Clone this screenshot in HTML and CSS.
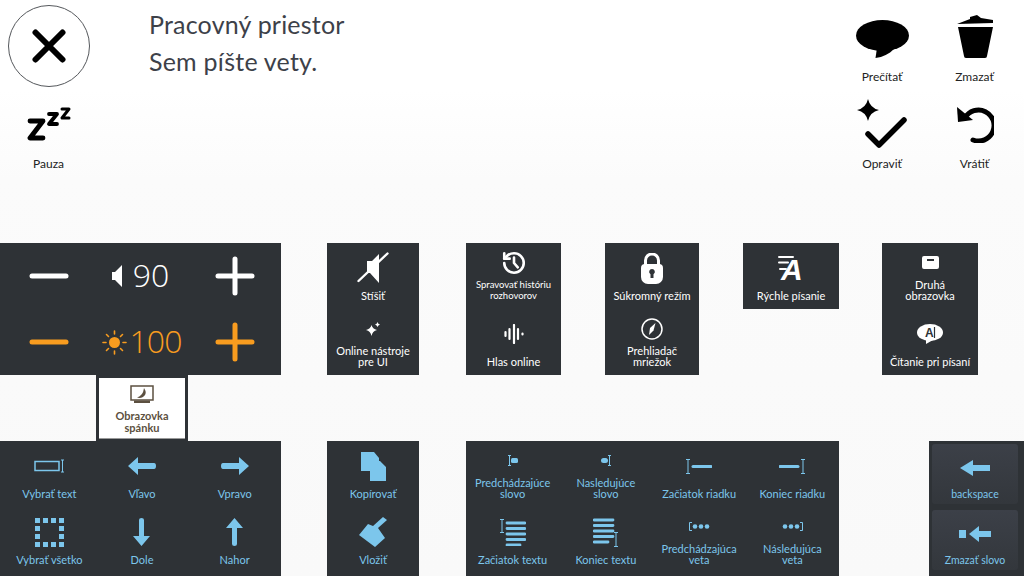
FILE: index.html
```html
<!DOCTYPE html>
<html lang="sk">
<head>
    <meta charset="UTF-8">
    <title>Pracovný priestor</title>
    <link rel="stylesheet" href="styles.css">
</head>
<body>
    <header class="top">
        <div class="left-col">
            <div class="close-wrap">
                <button class="close-button" aria-label="Zavrieť">
                    <svg width="34" height="34" viewBox="0 0 34 34"><path d="M3.500 3.500 30.500 30.500M30.500 3.500 3.500 30.500" class="stroke" stroke-width="6"/></svg>
                </button>
            </div>
            <div class="action">
                <div class="action-icon">
                    <svg width="44" height="34" viewBox="0 0 44 34"><path d="M3 14H16L3 31H16" class="stroke" stroke-width="4.800"/><path d="M22 7H30L22 17H30" class="stroke" stroke-width="3.800"/><path d="M35 2H42L35 11H42" class="stroke" stroke-width="3"/></svg>
                </div>
                <div class="action-label">Pauza</div>
            </div>
        </div>
        <div class="workspace">
            <div>Pracovný priestor</div>
            <div>Sem píšte vety.</div>
        </div>
        <div class="actions">
            <div class="action">
                <div class="action-icon">
                    <svg class="bubble-icon" width="53" height="38" viewBox="0 0 53 38"><ellipse cx="26.500" cy="15.500" rx="26.500" ry="15.500"/><path d="M21 28 19.500 38C27 37 33 34 38 29Z"/></svg>
                </div>
                <div class="action-label">Prečítať</div>
            </div>
            <div class="action">
                <div class="action-icon">
                    <svg width="36" height="43" viewBox="0 0 36 43"><path d="M0 9 13 4V2L20 0 24 3 36 5V8Z"/><path d="M1 12H36L30 41Q30 43 28 43H9Q7 43 7 41Z"/></svg>
                </div>
                <div class="action-label">Zmazať</div>
            </div>
            <div class="action">
                <div class="action-icon">
                    <svg width="50" height="50" viewBox="0 0 50 50"><path d="M11 0Q13 9 22 11 13 13 11 22 9 13 0 11 9 9 11 0Z"/><path d="M11 35 22 46 47 21" class="stroke" stroke-width="5.500"/></svg>
                </div>
                <div class="action-label">Opraviť</div>
            </div>
            <div class="action">
                <div class="action-icon">
                    <svg width="38" height="38" viewBox="0 0 38 38"><path d="M9 13A15.500 15.500 0 1 1 17 35" fill="none" stroke="#000" stroke-width="5" stroke-linecap="round"/><path d="M1 2 2 17 17 15Z"/></svg>
                </div>
                <div class="action-label">Vrátiť</div>
            </div>
        </div>
    </header>

    <section class="panel-row">
        <div class="panel panel-levels">
            <div class="level-cell"><svg width="40" height="6" viewBox="0 0 40 6"><path d="M3 3H37" class="stroke" stroke-width="5"/></svg></div>
            <div class="level-cell level-value">
                <svg width="11" height="22" viewBox="0 0 11 22"><path d="M0 7H3L10 0V22L3 15H0Z" fill="#fff"/></svg>
                <span class="level-num">90</span>
            </div>
            <div class="level-cell"><svg width="40" height="40" viewBox="0 0 40 40"><path d="M3 20H37M20 3V37" class="stroke" stroke-width="5"/></svg></div>
            <div class="level-cell level-orange"><svg width="40" height="6" viewBox="0 0 40 6"><path d="M3 3H37" class="stroke" stroke-width="5"/></svg></div>
            <div class="level-cell level-value level-orange">
                <svg width="25" height="25" viewBox="0 0 25 25"><circle cx="12.500" cy="12.500" r="5.500" fill="currentColor"/><path d="M12.500 1V4M12.500 21V24M1 12.500H4M21 12.500H24M4.500 4.500 6.500 6.500M18.500 18.500 20.500 20.500M20.500 4.500 18.500 6.500M6.500 18.500 4.500 20.500" class="stroke" stroke-width="1.600"/></svg>
                <span class="level-num">100</span>
            </div>
            <div class="level-cell level-orange"><svg width="40" height="40" viewBox="0 0 40 40"><path d="M3 20H37M20 3V37" class="stroke" stroke-width="5"/></svg></div>
        </div>

        <div class="panel panel-mute">
            <div class="tile">
                <div class="tile-icon"><svg width="32" height="32" viewBox="0 0 32 32"><path d="M10 9H15L22 2V31L13 21H10Z" fill="#fff"/><path d="M1.500 29 30.500 1.500" class="stroke" stroke-width="2.400"/></svg></div>
                <div class="tile-label">Stíšiť</div>
            </div>
            <div class="tile">
                <div class="tile-icon"><svg width="14" height="14" viewBox="0 0 14 14"><path d="M5.500 3Q6.500 7 11 8 6.500 9 5.500 14 4.500 9 0 8 4.500 7 5.500 3Z" fill="#fff"/><path d="M11.500 0Q12 2 14 2.500 12 3 11.500 5 11 3 9 2.500 11 2 11.500 0Z" fill="#fff"/></svg></div>
                <div class="tile-label">Online nástroje<br>pre UI</div>
            </div>
        </div>

        <div class="panel panel-history">
            <div class="tile">
                <div class="tile-icon"><svg width="26" height="26" viewBox="0 0 24 24"><path d="M3 12a9 9 0 1 0 9-9 9.750 9.750 0 0 0-6.740 2.740L3 8" class="stroke" stroke-width="2.400"/><path d="M3 3v5h5" class="stroke" stroke-width="2.400"/><path d="M12 7v5l3.500 4" class="stroke" stroke-width="2.400"/></svg></div>
                <div class="tile-label tile-label-small">Spravovať históriu<br>rozhovorov</div>
            </div>
            <div class="tile">
                <div class="tile-icon"><svg width="20" height="20" viewBox="0 0 20 20"><path d="M1.500 8V12M5.500 5V15M10 1V19M14 5V15M18.500 9.500V10.500" class="stroke" stroke-width="2.200"/></svg></div>
                <div class="tile-label">Hlas online</div>
            </div>
        </div>

        <div class="panel panel-private">
            <div class="tile">
                <div class="tile-icon"><svg width="22" height="31" viewBox="0 0 22 31"><path d="M4.500 13V7.500a6.500 6.500 0 0 1 13 0V13" fill="none" stroke="#fff" stroke-width="3"/><path fill-rule="evenodd" d="M4 11H18Q22 11 22 15V24A7 7 0 0 1 15 31H7A7 7 0 0 1 0 24V15Q0 11 4 11ZM11 16A2.800 2.800 0 0 0 9.500 21.200V25H12.500V21.200A2.800 2.800 0 0 0 11 16Z" fill="#fff"/></svg></div>
                <div class="tile-label">Súkromný režím</div>
            </div>
            <div class="tile">
                <div class="tile-icon"><svg width="22" height="22" viewBox="0 0 22 22"><circle cx="11" cy="11" r="10" fill="none" stroke="#fff" stroke-width="1.500"/><path d="M14.500 5 12.500 12.500 8 17 9 10Z" fill="#fff"/></svg></div>
                <div class="tile-label">Prehliadač<br>mriežok</div>
            </div>
        </div>

        <div class="panel panel-fast">
            <div class="tile">
                <div class="tile-icon"><svg width="30" height="38" viewBox="0 -6 30 38"><path d="M3 2H17M3 7.500H12M4 14H10" class="stroke" stroke-width="2"/><text x="5" y="25" class="fast-a">A</text></svg></div>
                <div class="tile-label">Rýchle písanie</div>
            </div>
        </div>

        <div class="panel panel-second">
            <div class="tile">
                <div class="tile-icon"><svg width="17" height="13" viewBox="0 0 17 13"><path fill-rule="evenodd" d="M2 0H15Q17 0 17 2V11Q17 13 15 13H2Q0 13 0 11V2Q0 0 2 0ZM5 3V5H12V3Z" fill="#fff"/></svg></div>
                <div class="tile-label">Druhá<br>obrazovka</div>
            </div>
            <div class="tile">
                <div class="tile-icon"><svg width="26" height="20" viewBox="0 0 26 20"><ellipse cx="13" cy="8.500" rx="13" ry="8.500" fill="#fff"/><path d="M9 15 9 20 16 16Z" fill="#fff"/><text x="8" y="13" class="bubble-a">A</text><path d="M17.500 3V14" stroke="#2e3236" stroke-width="1.200"/></svg></div>
                <div class="tile-label">Čítanie pri písaní</div>
            </div>
        </div>
    </section>

    <div class="sleep-tile">
        <div class="sleep-inner">
            <svg width="24" height="18" viewBox="0 0 24 18"><path d="M1 1H23V15H1Z" fill="none" stroke="#5c5040" stroke-width="1.500"/><path d="M14 3Q18 9 13 12 10 13.500 7 12.500 13 11 14 3Z" fill="#5c5040"/><path d="M4 15.500H20V18H4Z" fill="#5c5040"/></svg>
            <div class="sleep-label">Obrazovka<br>spánku</div>
        </div>
    </div>

    <section class="panel-row panel-row-bottom">
        <div class="panel panel-move blue">
            <div class="tile">
                <div class="tile-icon"><svg width="31" height="14" viewBox="0 0 31 14"><path d="M1 2.500H25V11.500H1Z" fill="none" stroke="currentColor" stroke-width="1.500"/><path d="M27 1H30M28.500 1V13M27 13H30" fill="none" stroke="currentColor"/></svg></div>
                <div class="tile-label">Vybrať text</div>
            </div>
            <div class="tile">
                <div class="tile-icon"><svg width="28" height="18" viewBox="0 0 28 18"><path d="M0 9 10 0V6H26Q28 6 28 9T26 12H10V18Z" fill="currentColor"/></svg></div>
                <div class="tile-label">Vľavo</div>
            </div>
            <div class="tile">
                <div class="tile-icon"><svg width="28" height="18" viewBox="0 0 28 18"><path d="M28 9 18 0V6H2Q0 6 0 9T2 12H18V18Z" fill="currentColor"/></svg></div>
                <div class="tile-label">Vpravo</div>
            </div>
            <div class="tile">
                <div class="tile-icon"><svg width="29" height="29" viewBox="0 0 29 29" fill="currentColor"><path d="M0 0H5V5H0ZM8 0H13V5H8ZM16 0H21V5H16ZM24 0H29V5H24ZM0 8H5V13H0ZM24 8H29V13H24ZM0 16H5V21H0ZM24 16H29V21H24ZM0 24H5V29H0ZM8 24H13V29H8ZM16 24H21V29H16ZM24 24H29V29H24Z"/></svg></div>
                <div class="tile-label">Vybrať všetko</div>
            </div>
            <div class="tile">
                <div class="tile-icon"><svg width="17" height="28" viewBox="0 0 17 28"><path d="M8.500 28 0 18H6V2Q6 0 8.500 0T11 2V18H17Z" fill="currentColor"/></svg></div>
                <div class="tile-label">Dole</div>
            </div>
            <div class="tile">
                <div class="tile-icon"><svg width="17" height="28" viewBox="0 0 17 28"><path d="M8.500 0 0 10H6V26Q6 28 8.500 28T11 26V10H17Z" fill="currentColor"/></svg></div>
                <div class="tile-label">Nahor</div>
            </div>
        </div>

        <div class="panel panel-clip blue">
            <div class="tile">
                <div class="tile-icon"><svg width="25" height="29" viewBox="0 0 25 29"><path d="M0 0H13L18 6V9H19L25 15V29H9V19H0Z" fill="currentColor"/></svg></div>
                <div class="tile-label">Kopírovať</div>
            </div>
            <div class="tile">
                <div class="tile-icon"><svg width="28" height="30" viewBox="0 0 28 30"><path d="M0 18 9 7 14 9 24 0 28 3 19 11 26 21 16 30Z" fill="currentColor"/></svg></div>
                <div class="tile-label">Vložiť</div>
            </div>
        </div>

        <div class="panel panel-nav blue">
            <div class="tile">
                <div class="tile-icon"><svg width="10" height="11" viewBox="0 0 10 11"><path d="M0 .500H3M1.500 .500V10.500M0 10.500H3" fill="none" stroke="currentColor"/><rect x="3" y="3" width="7" height="5" rx="1.500" fill="currentColor"/></svg></div>
                <div class="tile-label">Predchádzajúce<br>slovo</div>
            </div>
            <div class="tile">
                <div class="tile-icon"><svg width="10" height="11" viewBox="0 0 10 11"><path d="M7 .500H10M8.500 .500V10.500M7 10.500H10" fill="none" stroke="currentColor"/><rect x="0" y="3" width="7" height="5" rx="2.500" fill="currentColor"/></svg></div>
                <div class="tile-label">Nasledujúce<br>slovo</div>
            </div>
            <div class="tile">
                <div class="tile-icon"><svg width="26" height="15" viewBox="0 0 26 15"><path d="M0 .500H4M2 .500V14.500M0 14.500H4" fill="none" stroke="currentColor"/><path d="M7 7.500H25" class="stroke" stroke-width="3"/></svg></div>
                <div class="tile-label">Začiatok riadku</div>
            </div>
            <div class="tile">
                <div class="tile-icon"><svg width="26" height="15" viewBox="0 0 26 15"><path d="M22 .500H26M24 .500V14.500M22 14.500H26" fill="none" stroke="currentColor"/><path d="M1 7.500H19" class="stroke" stroke-width="3"/></svg></div>
                <div class="tile-label">Koniec riadku</div>
            </div>
            <div class="tile">
                <div class="tile-icon"><svg width="26" height="27" viewBox="0 0 26 27"><path d="M0 .500H4M2 .500V13.500M0 13.500H4" fill="none" stroke="currentColor"/><path d="M7 4H25M7 9.500H25M7 15H25M7 20.500H25M7 26H20" class="stroke" stroke-width="2.800"/></svg></div>
                <div class="tile-label">Začiatok textu</div>
            </div>
            <div class="tile">
                <div class="tile-icon"><svg width="26" height="29" viewBox="0 0 26 29"><path d="M21 14.500H25M23 14.500V28.500M21 28.500H25" fill="none" stroke="currentColor"/><path d="M1 2H20M1 7.500H20M1 13H20M1 18.500H20M1 24H15" class="stroke" stroke-width="2.800"/></svg></div>
                <div class="tile-label">Koniec textu</div>
            </div>
            <div class="tile">
                <div class="tile-icon"><svg width="21" height="9" viewBox="0 0 21 9"><path d="M3 .500H.500V8.500H3" fill="none" stroke="currentColor"/><circle cx="6" cy="4.500" r="2.300" fill="currentColor"/><circle cx="12" cy="4.500" r="2.300" fill="currentColor"/><circle cx="18" cy="4.500" r="2.300" fill="currentColor"/></svg></div>
                <div class="tile-label">Predchádzajúca<br>veta</div>
            </div>
            <div class="tile">
                <div class="tile-icon"><svg width="21" height="9" viewBox="0 0 21 9"><path d="M18 .500H20.500V8.500H18" fill="none" stroke="currentColor"/><circle cx="3" cy="4.500" r="2.300" fill="currentColor"/><circle cx="9" cy="4.500" r="2.300" fill="currentColor"/><circle cx="15" cy="4.500" r="2.300" fill="currentColor"/></svg></div>
                <div class="tile-label">Následujúca<br>veta</div>
            </div>
        </div>

        <div class="panel panel-erase blue">
            <div class="key">
                <div class="tile-icon"><svg width="30" height="16" viewBox="0 0 30 16"><path d="M0 8 13 0V5H30V11H13V16Z" fill="currentColor"/></svg></div>
                <div class="tile-label key-label">backspace</div>
            </div>
            <div class="key">
                <div class="tile-icon"><svg width="32" height="16" viewBox="0 0 32 16"><path d="M0 4H7V12H0Z" fill="currentColor"/><path d="M10 8 20 0V5H32V11H20V16Z" fill="currentColor"/></svg></div>
                <div class="tile-label key-label">Zmazať slovo</div>
            </div>
        </div>
    </section>
</body>
</html>
```

FILE: styles.css
```css
body {
    margin: 0;
    width: 1024px;
    height: 576px;
    overflow: hidden;
    font-family: Lato, "Noto Sans", sans-serif;
    background: linear-gradient(#ffffff 0, #ffffff 90px, #fbfbfb 180px, #f9f9f9 576px);
}
svg {
    display: block;
}
.stroke {
    fill: none;
    stroke: currentColor;
    stroke-linecap: round;
    stroke-linejoin: round;
}
.top {
    display: flex;
    height: 243px;
    color: #000;
}
.left-col {
    width: 97px;
}
.close-wrap {
    height: 87.5px;
    padding: 5px 0 0 8px;
    box-sizing: border-box;
}
.close-button {
    display: flex;
    align-items: center;
    justify-content: center;
    width: 82px;
    height: 82px;
    padding: 0;
    color: #000;
    background: #fff;
    border: 1px solid #55585c;
    border-radius: 50%;
}
.workspace {
    flex: 1;
    margin: 6px 0 0 52px;
    font-size: 25px;
    line-height: 37px;
    letter-spacing: .2px;
    color: #3d4149;
}
.actions {
    display: grid;
    grid-template-columns: 92px 93px;
    grid-auto-rows: 87.5px;
    margin-right: 3px;
}
.action {
    display: flex;
    flex-direction: column;
    align-items: center;
    height: 87.5px;
    padding: 4px 0 5px;
    box-sizing: border-box;
}
.action-icon {
    flex: 1;
    display: flex;
    align-items: center;
    justify-content: center;
}
.bubble-icon {
    margin-top: 4px;
}
.action-label {
    font-size: 12px;
    line-height: 13px;
    color: #222;
}
.panel-row {
    display: flex;
    align-items: flex-start;
}
.panel {
    background-color: #2e3236;
    color: #fff;
}
.panel-levels {
    display: grid;
    grid-template-columns: repeat(3, 1fr);
    grid-auto-rows: 66px;
    width: 281px;
    padding-left: 2px;
    box-sizing: border-box;
}
.level-cell {
    display: flex;
    align-items: center;
    justify-content: center;
}
.level-value {
    gap: 10px;
    padding-right: 2px;
}
.level-orange {
    color: #f89c1f;
}
.level-value.level-orange {
    gap: 3px;
    padding-right: 0;
}
.level-num {
    margin-top: -2px;
    font-family: "Open Sans", sans-serif;
    font-weight: 300;
    font-size: 32px;
    line-height: 40px;
}
.level-orange .level-num {
    letter-spacing: -1px;
}
.panel-mute {
    width: 92px;
    margin-left: 46px;
}
.panel-history {
    width: 95px;
    margin-left: 47px;
}
.panel-private {
    width: 94px;
    margin-left: 44px;
}
.panel-fast {
    width: 96px;
    margin-left: 44px;
}
.panel-second {
    width: 96px;
    margin-left: 43px;
}
.tile {
    display: flex;
    flex-direction: column;
    align-items: center;
    height: 66px;
    padding: 3px 0 8px;
    box-sizing: border-box;
    text-align: center;
}
.tile-icon {
    flex: 1;
    display: flex;
    align-items: center;
    justify-content: center;
}
.tile-label {
    font-size: 11px;
    line-height: 11px;
    white-space: nowrap;
}
.tile-label-small {
    font-size: 9.5px;
}
.fast-a {
    font-family: "Liberation Sans", sans-serif;
    font-size: 30px;
    font-weight: bold;
    font-style: italic;
    fill: #fff;
}
.bubble-a {
    font-family: "Liberation Sans", sans-serif;
    font-size: 12px;
    font-weight: bold;
    fill: #2e3236;
}
.sleep-tile {
    width: 92px;
    height: 66px;
    margin-left: 96px;
    padding: 3px 3px 2px;
    box-sizing: border-box;
    background-color: #2e3236;
}
.sleep-inner {
    display: flex;
    flex-direction: column;
    align-items: center;
    height: 100%;
    padding-top: 7px;
    box-sizing: border-box;
    background-color: #fff;
    border-bottom: 1px solid #999;
}
.sleep-label {
    margin-top: 7px;
    font-size: 11px;
    line-height: 12px;
    font-weight: bold;
    text-align: center;
    color: #5c5040;
}
.panel-row-bottom {
    height: 135px;
}
.blue {
    color: #7cc6ec;
}
.panel-move {
    display: grid;
    grid-template-columns: repeat(3, 1fr);
    grid-auto-rows: 66px;
    width: 281px;
    height: 135px;
    padding-left: 3px;
    box-sizing: border-box;
}
.panel-clip {
    width: 92px;
    height: 135px;
    margin-left: 46px;
}
.panel-nav {
    display: grid;
    grid-template-columns: repeat(4, 1fr);
    grid-auto-rows: 66px;
    width: 373px;
    height: 135px;
    margin-left: 47px;
}
.panel-erase {
    display: flex;
    flex-direction: column;
    gap: 6px;
    width: 95px;
    height: 135px;
    margin-left: 90px;
    padding: 3px 6px 0 3px;
    box-sizing: border-box;
}
.key {
    display: flex;
    flex-direction: column;
    align-items: center;
    height: 60px;
    padding: 3px 0 4px;
    box-sizing: border-box;
    border-radius: 3px;
    background: linear-gradient(#3c4048, #33373c);
}
.key-label {
    font-size: 10.5px;
}
```
